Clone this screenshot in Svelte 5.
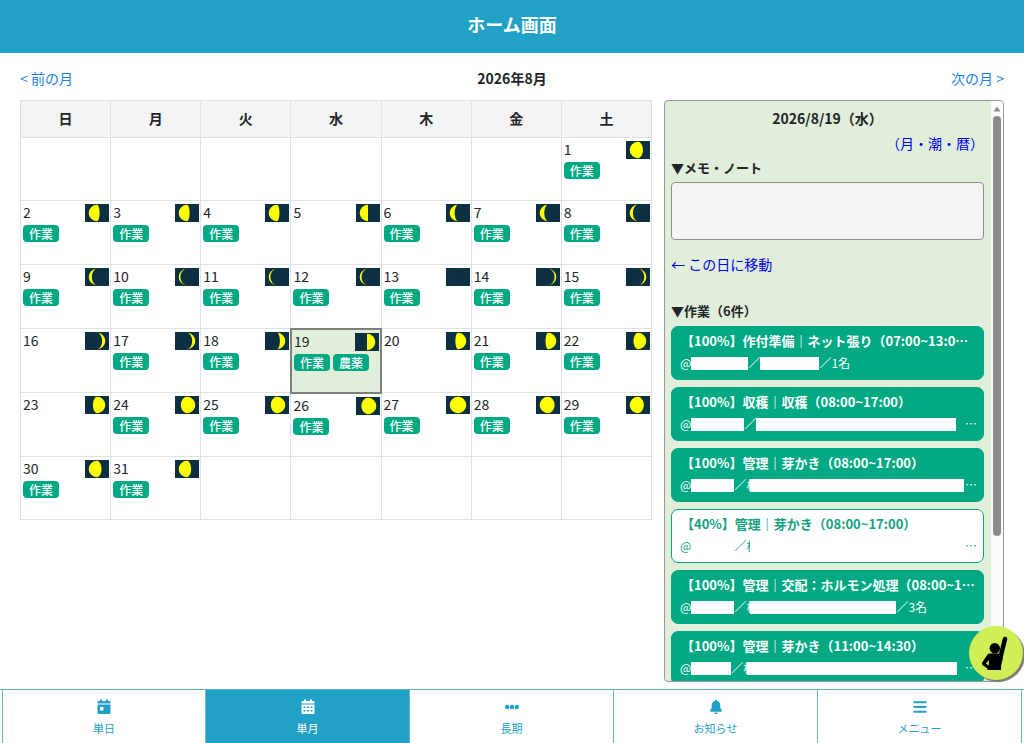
<script>
  const weekdays = ['日', '月', '火', '水', '木', '金', '土'];

  // side: lit half of the disc; k: bulge of the terminator (1 full, 0 half, -1 new)
  const moons = {
    1: ['L', 0.6], 2: ['L', 0.32], 3: ['L', 0.32], 4: ['L', 0.3], 5: ['L', 0],
    6: ['L', -0.4], 7: ['L', -0.45], 8: ['L', -0.62], 9: ['L', -0.62], 10: ['L', -0.8],
    11: ['L', -0.8], 12: ['L', -0.78], 13: ['L', -1], 14: ['R', -0.8], 15: ['R', -0.76],
    16: ['R', -0.62], 17: ['R', -0.62], 18: ['R', -0.35], 19: ['R', 0], 20: ['R', 0.32],
    21: ['R', 0.3], 22: ['R', 0.55], 23: ['R', 0.5], 24: ['R', 0.75], 25: ['R', 0.75],
    26: ['R', 0.8], 27: ['R', 1], 28: ['L', 0.8], 29: ['L', 0.7], 30: ['L', 0.55], 31: ['L', 0.5]
  };
  const noWork = [5, 16, 20, 23];
  const selected = 19;

  const weeks = Array.from({ length: 6 }, (_, w) =>
    Array.from({ length: 7 }, (_, d) => {
      const n = w * 7 + d - 5;
      return n >= 1 && n <= 31 ? n : null;
    })
  );

  function tags(n) {
    if (noWork.includes(n)) return [];
    return n === selected ? ['作業', '農薬'] : ['作業'];
  }

  function moonPath(n) {
    const [side, k] = moons[n];
    const rx = Math.abs(k) * 8.3;
    const outer = side === 'L' ? 0 : 1;
    const inner = k >= 0 ? outer : 1 - outer;
    return `M12 0.7A8.3 8.3 0 0 ${outer} 12 17.3A${rx} 8.3 0 0 ${inner} 12 0.7Z`;
  }

  const tasks = [
    { title: '【100%】作付準備｜ネット張り（07:00~13:00）', a: 57, b: 59, tail: '／1名' },
    { title: '【100%】収穫｜収穫（08:00~17:00）', a: 53, b: 200, more: true },
    { title: '【100%】管理｜芽かき（08:00~17:00）', a: 43, b: 214, peek: true, more: true },
    { title: '【40%】管理｜芽かき（08:00~17:00）', a: 43, b: 210, peek: true, more: true, open: true },
    { title: '【100%】管理｜交配：ホルモン処理（08:00~17:00）', a: 43, b: 146, peek: true, tail: '／3名' },
    { title: '【100%】管理｜芽かき（11:00~14:30）', a: 40, b: 210, peek: true, more: true }
  ];

  const tabs = [
    { label: '単日', icon: 'day' },
    { label: '単月', icon: 'month', active: true },
    { label: '長期', icon: 'dots' },
    { label: 'お知らせ', icon: 'bell' },
    { label: 'メニュー', icon: 'menu' }
  ];
</script>

<div class="app">
  <header><h1>ホーム画面</h1></header>

  <div class="monthbar">
    <a href="#prev">&lt; 前の月</a>
    <h2>2026年8月</h2>
    <a href="#next">次の月 &gt;</a>
  </div>

  <main>
    <div class="calendar">
      <table>
        <thead>
          <tr>{#each weekdays as w}<th scope="col">{w}</th>{/each}</tr>
        </thead>
        <tbody>
          {#each weeks as week}
            <tr>
              {#each week as n}
                <td class:selected={n === selected}>
                  {#if n}
                    <div class="dayhead">
                      <span>{n}</span>
                      <svg width="24" height="18" viewBox="0 0 24 18" aria-hidden="true">
                        <rect width="24" height="18" fill="#0c3042" />
                        {#if moons[n][1] === -1}
                          <circle cx="12" cy="9" r="8" fill="none" stroke="#163a42" stroke-width="0.6" />
                        {:else}
                          <path d={moonPath(n)} fill="#ffff00" />
                        {/if}
                      </svg>
                    </div>
                    <div class="tags">
                      {#each tags(n) as t}<span class="tag">{t}</span>{/each}
                    </div>
                  {/if}
                </td>
              {/each}
            </tr>
          {/each}
        </tbody>
      </table>
    </div>

    <aside>
      <div class="detail">
        <h3 class="date">2026/8/19（水）</h3>
        <a class="almanac" href="#moon">（月・潮・暦）</a>
        <label for="memo">▼メモ・ノート</label>
        <textarea id="memo"></textarea>
        <a class="jump" href="#day">← この日に移動</a>
        <h3 class="section">▼作業（6件）</h3>
        <div class="tasks">
          {#each tasks as t}
            <article class:open={t.open}>
              <h4>{t.title}</h4>
              <p>
                <span>@</span><i style="width:{t.a}px"></i><span>／</span>{#if t.peek}<span class="peek">横</span>{/if}<i style="width:{t.b}px"></i>{#if t.tail}<span>{t.tail}</span>{/if}
                {#if t.more}<span class="more">…</span>{/if}
              </p>
            </article>
          {/each}
        </div>
      </div>
      <div class="scroll" aria-hidden="true">
        <svg width="8" height="6" viewBox="0 0 8 6"><path d="M4 0.5L7.5 5.5H0.5Z" fill="#8b8b8b" /></svg>
        <div class="thumb"></div>
      </div>
    </aside>
  </main>

  <nav>
    {#each tabs as tab}
      <button type="button" class:active={tab.active}>
        <svg width="16" height="16" viewBox="0 0 16 16" fill="currentColor" aria-hidden="true">
          {#if tab.icon === 'day'}
            <path fill-rule="evenodd" d="M4 .5h2V2h4V.5h2V2h1.500a1 1 0 0 1 1 1v1.500h-13V3a1 1 0 0 1 1-1H4ZM1.500 5.500h13v8.500a1 1 0 0 1-1 1h-11a1 1 0 0 1-1-1ZM4 8v3.500h3.500V8Z" />
          {:else if tab.icon === 'month'}
            <path fill-rule="evenodd" d="M4 .5h2V2h4V.5h2V2h1.500a1 1 0 0 1 1 1v1.500h-13V3a1 1 0 0 1 1-1H4ZM1.500 5.500h13v8.500a1 1 0 0 1-1 1h-11a1 1 0 0 1-1-1ZM3.500 7.500v1.500h2v-1.500ZM7 7.500v1.500h2v-1.500ZM10.500 7.500v1.500h2v-1.500ZM3.500 11v1.500h2v-1.500ZM7 11v1.500h2v-1.500ZM10.500 11v1.500h2v-1.500Z" />
          {:else if tab.icon === 'dots'}
            <circle cx="3.200" cy="8" r="2.200" /><circle cx="8" cy="8" r="2.200" /><circle cx="12.800" cy="8" r="2.200" />
          {:else if tab.icon === 'bell'}
            <path d="M8 .4a1 1 0 0 0-1 1v.5A4.300 4.300 0 0 0 3.700 6v1.500c0 1.500-.5 2.600-1.500 3.800-.6.700-.3 1.500.5 1.500h10.600c.8 0 1.100-.8.500-1.500-1-1.200-1.500-2.300-1.500-3.800V6A4.300 4.300 0 0 0 9 1.900v-.5a1 1 0 0 0-1-1ZM6.200 13.500h3.600a1.800 1.800 0 0 1-3.600 0Z" />
          {:else}
            <rect x="1.500" y="2.200" width="13" height="2" rx=".4" /><rect x="1.500" y="7" width="13" height="2" rx=".4" /><rect x="1.500" y="11.800" width="13" height="2" rx=".4" />
          {/if}
        </svg>
        <span>{tab.label}</span>
      </button>
    {/each}
  </nav>

  <button type="button" class="fab" aria-label="ヘルプ">
    <svg width="54" height="54" viewBox="0 0 54 54" aria-hidden="true">
      <circle cx="25.800" cy="22.300" r="5.200" />
      <path d="M36 13L31.500 31" stroke="#000" stroke-width="4.600" stroke-linecap="round" />
      <path fill-rule="evenodd" d="M18.500 28.500Q19.500 27.500 21.500 27.500H30L34 27V32L32 40V44H18.500V42.500L14 39.500Q12.200 38.300 13.200 36.500ZM19.800 34L17 37.500L19.800 39.500Z" />
    </svg>
  </button>
</div>

<style>
  :global(body) {
    margin: 0;
    background: #fff;
  }
  .app {
    height: 100vh;
    display: flex;
    flex-direction: column;
    font-family: 'Noto Sans CJK JP', sans-serif;
    font-size: 14px;
    line-height: 20px;
    color: #212529;
  }
  h1, h2, h3, h4, p {
    margin: 0;
    font-size: inherit;
  }
  a {
    text-decoration: none;
  }
  header {
    background: #22a1c6;
    color: #fff;
    text-align: center;
    padding: 10px 0 15px;
  }
  h1 {
    font-size: 18px;
    line-height: 28px;
  }
  .monthbar {
    display: grid;
    grid-template-columns: 1fr auto 1fr;
    padding: 15px 20px 12px;
  }
  .monthbar a {
    color: #1a7fe0;
  }
  .monthbar a:last-child {
    text-align: right;
  }
  main {
    flex: 1;
    min-height: 0;
    display: flex;
    gap: 12px;
    padding: 0 20px 7px;
  }
  .calendar {
    flex: 1;
    min-width: 0;
  }
  table {
    width: 100%;
    table-layout: fixed;
    border-collapse: collapse;
  }
  th {
    height: 34px;
    padding: 0 0 2px;
    background: #f4f4f4;
    border: 1px solid #dee2e6;
  }
  td {
    box-sizing: border-box;
    height: 64px;
    padding: 3px 1px 0 2px;
    vertical-align: top;
    border: 1px solid #dee2e6;
  }
  tbody tr:first-child td,
  tbody tr:last-child td {
    height: 63px;
  }
  td.selected {
    background: #e1eed9;
    border: 2px solid #7f7f7f;
  }
  .dayhead {
    display: flex;
    justify-content: space-between;
    height: 21px;
    line-height: 16px;
  }
  .dayhead svg {
    display: block;
  }
  .tags {
    display: flex;
    gap: 3px;
  }
  .tag {
    padding: 0 6px;
    border-radius: 4px;
    background: #00a983;
    color: #fff;
    font-size: 12px;
    line-height: 17px;
    font-weight: 500;
  }
  aside {
    box-sizing: border-box;
    flex: none;
    width: 340px;
    display: flex;
    overflow: hidden;
    border: 1px solid #999;
    border-radius: 4px;
    background: #e1eed9;
  }
  .detail {
    flex: 1;
    min-width: 0;
    overflow: hidden;
    padding: 7px 7px 0 6px;
    display: flex;
    flex-direction: column;
  }
  .detail > * {
    flex-shrink: 0;
  }
  .date {
    text-align: center;
  }
  .almanac, .jump {
    color: #0000ee;
  }
  .almanac {
    align-self: flex-end;
    margin-top: 5px;
  }
  label, .section {
    font-size: 13px;
    font-weight: 700;
  }
  label {
    margin-top: 5px;
  }
  textarea {
    box-sizing: border-box;
    width: 100%;
    height: 58px;
    margin: 4px 0 14px;
    border: 1px solid #8f8f8f;
    border-radius: 4px;
    background: #f4f4f4;
    resize: none;
  }
  .section {
    margin: 27px 0 5px;
  }
  .tasks {
    display: grid;
    gap: 7px;
  }
  article {
    box-sizing: border-box;
    min-width: 0;
    padding: 3px 3px 5px 8px;
    border: 1px solid #00a983;
    border-radius: 7px;
    background: #00a983;
    color: #fff;
  }
  article.open {
    background: #fff;
    color: #15a07f;
  }
  h4 {
    margin: 0 5px 0 1px;
    font-size: 13px;
    line-height: 22px;
    white-space: nowrap;
    overflow: hidden;
    text-overflow: ellipsis;
  }
  p {
    display: flex;
    align-items: center;
    font-size: 12px;
    line-height: 22px;
    white-space: nowrap;
  }
  p i {
    position: relative;
    flex: none;
    height: 13px;
    background: #fff;
  }
  .peek {
    margin-right: -8px;
  }
  .more {
    margin-left: auto;
    margin-right: 3px;
  }
  .scroll {
    flex: none;
    width: 12px;
    display: flex;
    flex-direction: column;
    align-items: center;
    gap: 4px;
    padding-top: 5px;
    background: #fcfcfc;
  }
  .thumb {
    width: 8px;
    height: 73%;
    border-radius: 4px;
    background: #8b8b8b;
  }
  nav {
    display: grid;
    grid-template-columns: repeat(5, 1fr);
    padding: 0 2px;
    border-top: 1px solid #5aaec4;
  }
  nav button {
    display: flex;
    flex-direction: column;
    align-items: center;
    gap: 5px;
    padding: 9px 0 6px;
    border: 0;
    border-right: 1px solid #6cb9ce;
    background: #fff;
    color: #22a1c6;
    font: inherit;
    font-size: 11px;
    line-height: 17px;
  }
  nav button:first-child {
    border-left: 1px solid #6cb9ce;
  }
  nav .active {
    background: #22a1c6;
    color: #fff;
  }
  .fab {
    position: fixed;
    right: 1px;
    bottom: 63px;
    width: 54px;
    height: 54px;
    padding: 0;
    border: 0;
    border-radius: 50%;
    background: #d0ee56;
    box-shadow: 2px 2px 1px #777;
  }
  .fab svg {
    display: block;
  }
</style>
